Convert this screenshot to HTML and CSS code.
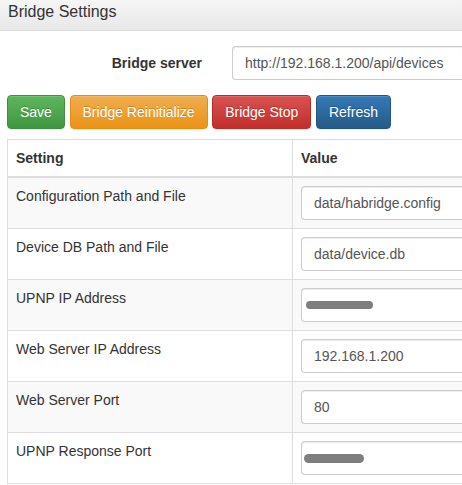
FILE: index.html
```html
<!DOCTYPE html>
<html lang="en">
<head>
<meta charset="utf-8">
<title>Bridge Settings</title>
<link rel="stylesheet" href="styles.css">
</head>
<body>
<div class="panel">
  <div class="panel-heading">
    <h3 class="panel-title">Bridge Settings</h3>
  </div>
  <div class="panel-body">
    <form class="server-form">
      <label class="server-label" for="bridge-server">Bridge server</label>
      <input class="form-control server-input" id="bridge-server" type="text" value="http://192.168.1.200/api/devices">
    </form>
    <div class="actions">
      <button class="btn btn-success" type="button">Save</button>
      <button class="btn btn-warning" type="button">Bridge Reinitialize</button>
      <button class="btn btn-danger" type="button">Bridge Stop</button>
      <button class="btn btn-primary" type="button">Refresh</button>
    </div>
    <table class="settings">
      <colgroup><col class="col-setting"><col class="col-value"></colgroup>
      <thead>
        <tr><th>Setting</th><th>Value</th></tr>
      </thead>
      <tbody>
        <tr><td>Configuration Path and File</td><td><input class="form-control" type="text" value="data/habridge.config"></td></tr>
        <tr><td>Device DB Path and File</td><td><input class="form-control" type="text" value="data/device.db"></td></tr>
        <tr><td>UPNP IP Address</td><td><div class="field"><input class="form-control" type="text" value=""><span class="redact redact-ip"></span></div></td></tr>
        <tr><td>Web Server IP Address</td><td><input class="form-control" type="text" value="192.168.1.200"></td></tr>
        <tr><td>Web Server Port</td><td><input class="form-control" type="text" value="80"></td></tr>
        <tr><td>UPNP Response Port</td><td><div class="field"><input class="form-control" type="text" value=""><span class="redact redact-port"></span></div></td></tr>
      </tbody>
    </table>
  </div>
</div>
</body>
</html>
```

FILE: styles.css
```css
* { box-sizing: border-box; }

html, body {
  margin: 0;
  padding: 0;
  background: #fff;
  overflow: hidden;
}

body {
  width: 462px;
  height: 485px;
  font-family: "Liberation Sans", Arial, sans-serif;
  font-size: 14px;
  line-height: 20px;
  color: #333;
}

.panel {
  width: 462px;
}

.panel-heading {
  height: 31px;
  padding: 2px 8px 0;
  background: linear-gradient(to bottom, #f5f5f5 0%, #e8e8e8 100%);
  border-bottom: 1px solid #ddd;
}

.panel-title {
  margin: 0;
  font-size: 16px;
  font-weight: normal;
  line-height: 20px;
  color: #333;
}

.panel-body {
  padding: 15px 0 0 7px;
}

.server-form {
  display: flex;
  align-items: center;
  margin: 0;
}

.server-label {
  width: 195px;
  margin-right: 30px;
  text-align: right;
  font-weight: bold;
}

.form-control {
  display: block;
  height: 34px;
  padding: 6px 12px;
  font-family: inherit;
  font-size: 14px;
  line-height: 20px;
  color: #555;
  background: #fff;
  border: 1px solid #ccc;
  border-right: none;
  border-radius: 4px 0 0 4px;
  box-shadow: inset 0 1px 1px rgba(0, 0, 0, .075);
  outline: none;
}

.server-input {
  flex: 1;
  min-width: 0;
}

.actions {
  display: flex;
  gap: 4.6px;
  margin-top: 15px;
}

.btn {
  height: 34px;
  padding: 6px 12px;
  font-family: inherit;
  font-size: 14px;
  line-height: 20px;
  color: #fff;
  border: 1px solid transparent;
  border-radius: 4px;
  text-shadow: 0 -1px 0 rgba(0, 0, 0, .2);
  box-shadow: inset 0 1px 0 rgba(255, 255, 255, .15), 0 1px 1px rgba(0, 0, 0, .075);
  cursor: pointer;
}

.btn-success {
  background: linear-gradient(to bottom, #5cb85c 0%, #419641 100%);
  border-color: #3e8f3e;
}

.btn-warning {
  background: linear-gradient(to bottom, #f0ad4e 0%, #eb9316 100%);
  border-color: #e38d13;
}

.btn-danger {
  background: linear-gradient(to bottom, #d9534f 0%, #c12e2a 100%);
  border-color: #b92c28;
}

.btn-primary {
  background: linear-gradient(to bottom, #337ab7 0%, #265a88 100%);
  border-color: #245580;
}

.settings {
  width: 455px;
  margin-top: 10px;
  border-collapse: collapse;
  table-layout: fixed;
  border: 1px solid #ddd;
  border-right: none;
}

.col-setting { width: 285px; }
.col-value { width: 170px; }

.settings th,
.settings td {
  padding: 8px;
  text-align: left;
  vertical-align: top;
  border: 1px solid #ddd;
}

.settings th:last-child,
.settings td:last-child {
  padding-right: 0;
  border-right: none;
}

.settings th {
  font-weight: bold;
  border-bottom-width: 2px;
}

.settings tbody tr:nth-child(odd) {
  background: #f9f9f9;
}

.settings td .form-control {
  width: 100%;
}

.field {
  position: relative;
}

.redact {
  position: absolute;
  height: 8.5px;
  background: #7e7e7e;
  border-radius: 5px;
  filter: blur(0.4px);
}

.redact-ip {
  left: 5px;
  top: 12.5px;
  width: 67px;
}

.redact-port {
  left: 3px;
  top: 13px;
  width: 60px;
}
```
